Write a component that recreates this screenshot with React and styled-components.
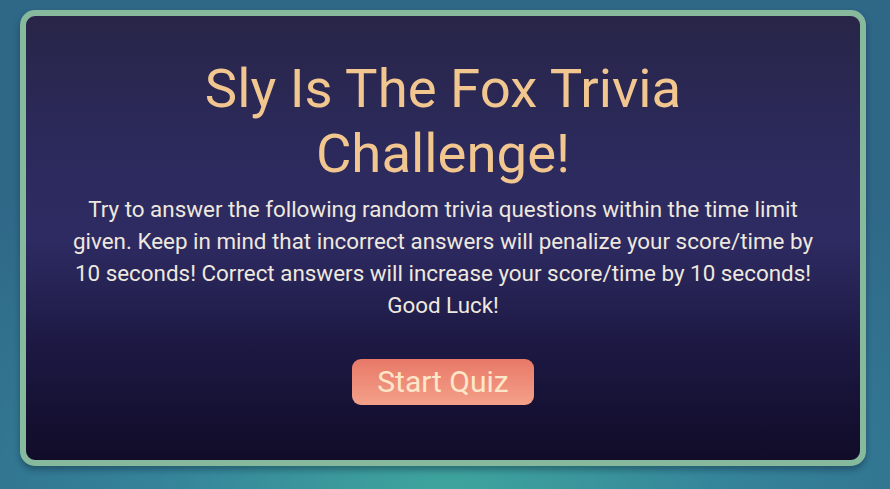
import React from 'react';
import styled, { createGlobalStyle } from 'styled-components';

const GlobalStyle = createGlobalStyle`
	html, body {
		margin: 0;
		padding: 0;
		height: 100%;
	}
	body {
		font-family: Roboto, 'Liberation Sans', sans-serif;
		background: radial-gradient(ellipse 70% 90% at 50% 105%, #3fa89d 0%, #35849a 45%, #2f6787 100%);
		background-color: #2f6787;
	}
	#root {
		min-height: 100%;
	}
`;

const Page = styled.div`
	box-sizing: border-box;
	height: 489px;
	padding: 10px 24px 23px 20px;
	display: flex;
`;

const Card = styled.main`
	flex: 1;
	box-sizing: border-box;
	border: 6px solid #87b99c;
	border-radius: 15px;
	background: linear-gradient(180deg, #282548 0%, #2c2a5c 30%, #2e2b63 50%, #1c1842 75%, #110c28 100%);
	box-shadow: 0 4px 6px rgba(10, 20, 40, 0.35);
	padding: 40px 40px 0;
	display: flex;
	flex-direction: column;
	align-items: center;
	text-align: center;
`;

const Title = styled.h1`
	margin: 0;
	max-width: 600px;
	font-size: 54.5px;
	font-weight: 400;
	line-height: 65px;
	color: #f1c68f;
`;

const Intro = styled.p`
	margin: 7px 0 0;
	max-width: 760px;
	font-size: 22.4px;
	line-height: 32px;
	color: #eee8de;
`;

const StartButton = styled.button`
	margin-top: 38px;
	padding: 5px 25px 6px;
	border: none;
	border-radius: 9px;
	background: linear-gradient(180deg, #e87868 0%, #f4a189 100%);
	color: #fde7c9;
	font-family: inherit;
	font-size: 30px;
	line-height: normal;
	cursor: pointer;
`;

const App = () => {
	return (
		<>
			<GlobalStyle />
			<Page>
				<Card>
					<Title>Sly Is The Fox Trivia Challenge!</Title>
					<Intro>
						Try to answer the following random trivia questions within the time limit given. Keep in
						mind that incorrect answers will penalize your score/time by 10 seconds! Correct answers
						will increase your score/time by 10 seconds! Good Luck!
					</Intro>
					<StartButton>Start Quiz</StartButton>
				</Card>
			</Page>
		</>
	);
};

export default App;
